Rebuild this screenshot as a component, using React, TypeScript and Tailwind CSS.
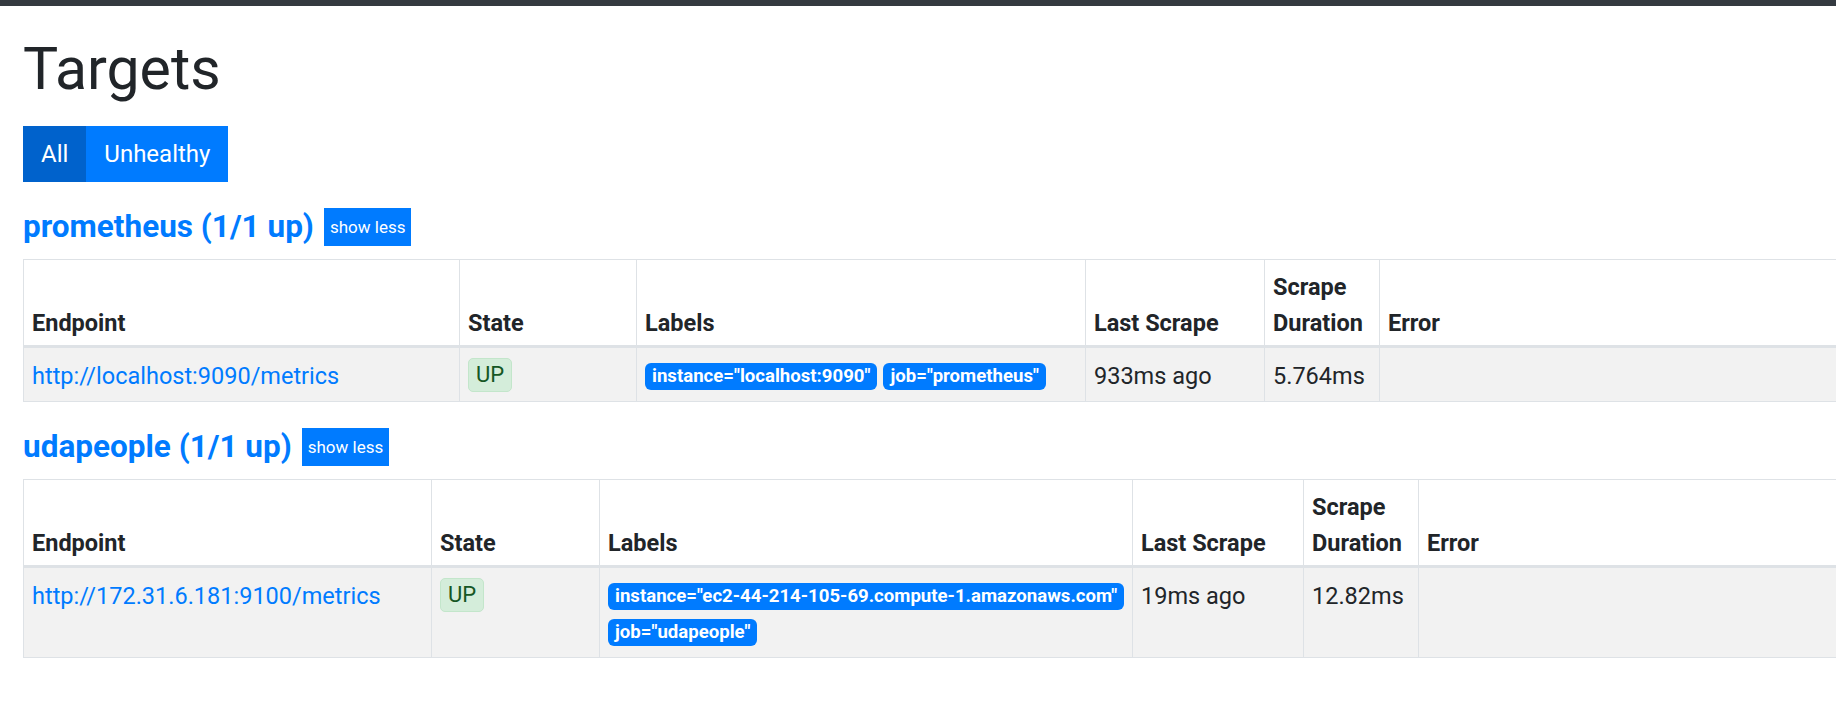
type Target = {
  endpoint: string;
  labels: string[];
  lastScrape: string;
  duration: string;
};

type Pool = {
  name: string;
  cols: number[];
  targets: Target[];
};

const pools: Pool[] = [
  {
    name: "prometheus (1/1 up)",
    cols: [436, 177, 449, 179, 115],
    targets: [
      {
        endpoint: "http://localhost:9090/metrics",
        labels: ['instance="localhost:9090"', 'job="prometheus"'],
        lastScrape: "933ms ago",
        duration: "5.764ms",
      },
    ],
  },
  {
    name: "udapeople (1/1 up)",
    cols: [408, 168, 533, 171, 115],
    targets: [
      {
        endpoint: "http://172.31.6.181:9100/metrics",
        labels: [
          'instance="ec2-44-214-105-69.compute-1.amazonaws.com"',
          'job="udapeople"',
        ],
        lastScrape: "19ms ago",
        duration: "12.82ms",
      },
    ],
  },
];

const headers = ["Endpoint", "State", "Labels", "Last Scrape", "Scrape Duration", "Error"];

function PoolTable({ pool }: { pool: Pool }) {
  return (
    <div>
      <div className="flex items-center h-[38px]">
        <h2 className="text-[31.5px] leading-[38px] font-bold text-[#007bff]">{pool.name}</h2>
        <button className="ml-[10px] h-[38px] px-[6px] bg-[#007bff] text-white text-[17px] leading-[38px]">
          show less
        </button>
      </div>

      <table className="mt-[13px] table-fixed border-collapse w-[1900px] text-[23.5px] leading-[36px] text-[#212529]">
        <colgroup>
          {pool.cols.map((w, i) => (
            <col key={i} style={{ width: w }} />
          ))}
          <col />
        </colgroup>
        <thead>
          <tr>
            {headers.map((h) => (
              <th
                key={h}
                className="border border-[#dee2e6] border-b-[3px] px-[8px] pt-[9px] pb-[4px] text-left align-bottom font-bold"
              >
                {h}
              </th>
            ))}
          </tr>
        </thead>
        <tbody>
          {pool.targets.map((t) => (
            <tr key={t.endpoint} className="bg-[#f2f2f2]">
              <td className="border border-[#dee2e6] px-[8px] pt-[10px] pb-[5px] align-top">
                <a className="text-[#007bff]">{t.endpoint}</a>
              </td>
              <td className="border border-[#dee2e6] px-[8px] pt-[8px] pb-[8px] align-top">
                <span className="inline-block h-[34px] px-[7px] rounded-[5px] border border-[#c3e6cb] bg-[#d4edda] text-[#155724] text-[22px] leading-[32px]">
                  UP
                </span>
              </td>
              <td className="border border-[#dee2e6] px-[8px] pt-[15px] pb-[11px] align-top">
                <div className="flex flex-wrap gap-x-[6px] gap-y-[9px]">
                  {t.labels.map((l) => (
                    <span
                      key={l}
                      className="h-[27px] px-[7px] rounded-[6px] bg-[#007bff] text-white text-[18.6px] font-bold leading-[27px] whitespace-nowrap"
                    >
                      {l}
                    </span>
                  ))}
                </div>
              </td>
              <td className="border border-[#dee2e6] px-[8px] pt-[10px] pb-[5px] align-top">{t.lastScrape}</td>
              <td className="border border-[#dee2e6] px-[8px] pt-[10px] pb-[5px] align-top">{t.duration}</td>
              <td className="border border-[#dee2e6] px-[8px] pt-[10px] pb-[5px] align-top"></td>
            </tr>
          ))}
        </tbody>
      </table>
    </div>
  );
}

export default function App() {
  return (
    <div className="min-h-screen w-full overflow-hidden bg-white font-['Roboto',sans-serif] text-[#212529]">
      <div className="h-[6px] bg-[#343a40]" />
      <div className="pl-[23px]">
        <h1 className="mt-[24px] text-[59px] leading-[77px] font-normal">Targets</h1>

        <div className="mt-[19px] flex h-[56px]">
          <button className="px-[18px] bg-[#0062cc] text-white text-[24px]">All</button>
          <button className="px-[18px] bg-[#007bff] text-white text-[24px]">Unhealthy</button>
        </div>

        <div className="mt-[26px] flex flex-col gap-[26px]">
          {pools.map((p) => (
            <PoolTable key={p.name} pool={p} />
          ))}
        </div>
      </div>
    </div>
  );
}
